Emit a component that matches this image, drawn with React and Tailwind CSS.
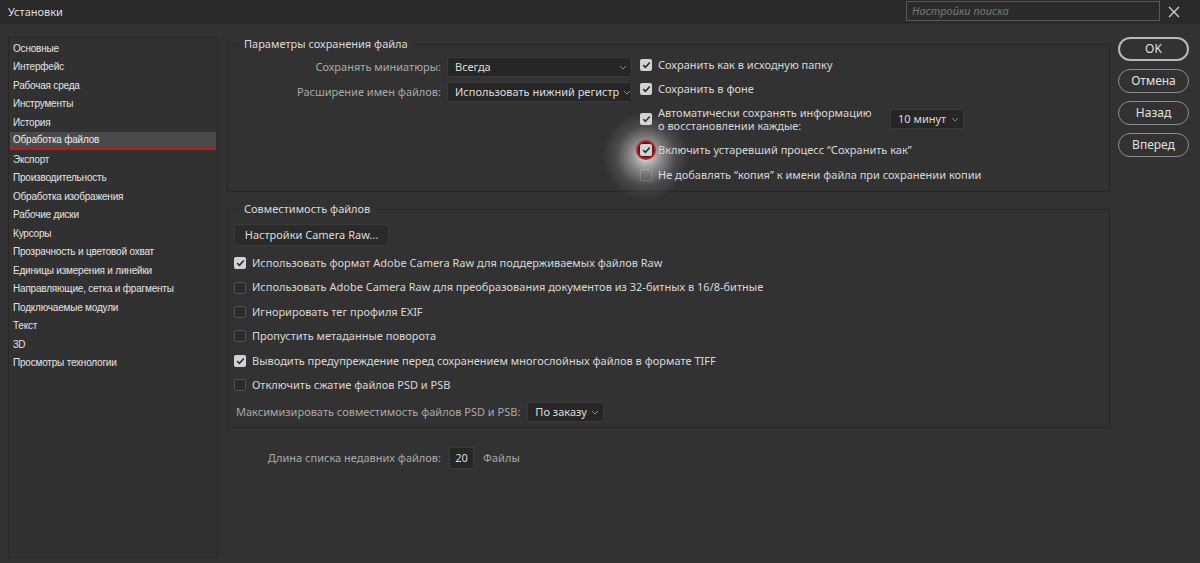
import React from "react";

const font = { fontFamily: '"Noto Sans", "Liberation Sans", sans-serif' };
const sideFont = { fontFamily: '"Liberation Sans", Arial, sans-serif' };

const sideItems = [
  "Основные",
  "Интерфейс",
  "Рабочая среда",
  "Инструменты",
  "История",
  "Обработка файлов",
  "Экспорт",
  "Производительность",
  "Обработка изображения",
  "Рабочие диски",
  "Курсоры",
  "Прозрачность и цветовой охват",
  "Единицы измерения и линейки",
  "Направляющие, сетка и фрагменты",
  "Подключаемые модули",
  "Текст",
  "3D",
  "Просмотры технологии",
];

const Chevron = () => (
  <svg width="8" height="5" viewBox="0 0 8 5" className="shrink-0">
    <polyline points="1,1 4,4 7,1" fill="none" stroke="#8a8a8a" strokeWidth="1" />
  </svg>
);

const Select = ({ value, className }) => (
  <div
    className={`flex items-center justify-between gap-[4px] h-[20px] pl-[7px] pr-[4px] bg-[#262626] border border-[#3a3a3a] rounded-[2px] text-[11px] text-[#dcdcdc] ${className}`}
  >
    <span className="whitespace-nowrap">{value}</span>
    <Chevron />
  </div>
);

const Check = ({ checked }) =>
  checked ? (
    <div className="w-[12px] h-[12px] rounded-[2px] bg-[#d2d2d2] flex items-center justify-center shrink-0">
      <svg width="9" height="8" viewBox="0 0 9 8">
        <polyline points="1.2,4.2 3.4,6.3 7.8,1.5" fill="none" stroke="#2e2e2e" strokeWidth="1.6" />
      </svg>
    </div>
  ) : (
    <div className="w-[12px] h-[12px] rounded-[2px] bg-[#2b2b2b] border border-[#555555] shrink-0" />
  );

const CheckRow = ({ checked, children, className = "" }) => (
  <div className={`flex items-center gap-[6px] text-[11px] text-[#d8d8d8] whitespace-nowrap ${className}`}>
    <Check checked={checked} />
    <span>{children}</span>
  </div>
);

const PillButton = ({ children, strong }) => (
  <div
    className={`w-[71px] h-[24px] rounded-full flex items-center justify-center text-[12px] text-[#e0e0e0] ${
      strong ? "border-2 border-[#b8b8b8]" : "border border-[#8e8e8e]"
    }`}
  >
    {children}
  </div>
);

export default function App() {
  return (
    <div className="w-[1200px] h-[563px] bg-[#323232] flex flex-col overflow-hidden select-none" style={font}>
      {/* Title bar */}
      <div className="h-[24px] bg-[#2a2a2a] flex items-center shrink-0">
        <span className="ml-[8px] text-[11px] text-[#dedede]">Установки</span>
        <div className="ml-auto w-[254px] h-[20px] mb-[2px] border border-[#595959] bg-[#2b2b2b] flex items-center px-[5px]">
          <span className="italic text-[11px] text-[#7a7a7a]">Настройки поиска</span>
        </div>
        <svg width="12" height="12" viewBox="0 0 12 12" className="ml-[8px] mr-[20px]">
          <path d="M1 1 L11 11 M11 1 L1 11" stroke="#d0d0d0" strokeWidth="1.4" />
        </svg>
      </div>

      {/* Body */}
      <div className="flex flex-1 min-h-0">
        {/* Sidebar */}
        <div
          className="ml-[8px] mt-[13px] w-[210px] h-[521px] border border-[#272727] bg-[#313131] p-px shrink-0"
          style={sideFont}
        >
          {sideItems.map((item, i) =>
            i === 5 ? (
              <div
                key={item}
                className="h-[18.5px] flex items-center pl-[3px] bg-[#4a4a4a] border-b-2 border-[#c3161c] text-[10px] text-[#ececec] tracking-[-0.2px]"
              >
                {item}
              </div>
            ) : (
              <div key={item} className="h-[18.5px] flex items-center pl-[3px] text-[10px] text-[#e4e4e4] tracking-[-0.2px]">
                {item}
              </div>
            )
          )}
        </div>

        {/* Main */}
        <div className="ml-[9px] w-[883px] shrink-0 flex flex-col">
          {/* Group 1 */}
          <fieldset className="mt-[11px] h-[157px] border border-[#272727] px-0 pb-0 relative">
            <legend className="ml-[11px] px-[5px] text-[11px] text-[#dadada] leading-[18px]">
              Параметры сохранения файла
            </legend>
            <div className="flex">
              <div className="w-[404px] flex flex-col gap-[5px] pt-[4px]">
                <div className="flex items-center justify-end gap-[6px]">
                  <span className="text-[11px] text-[#a9a9a9]">Сохранять миниатюры:</span>
                  <Select value="Всегда" className="w-[185px]" />
                </div>
                <div className="flex items-center justify-end gap-[6px]">
                  <span className="text-[11px] text-[#a9a9a9]">Расширение имен файлов:</span>
                  <Select value="Использовать нижний регистр" className="w-[185px]" />
                </div>
              </div>
              <div className="ml-[8px] flex flex-col">
                <CheckRow checked className="h-[24px]">Сохранить как в исходную папку</CheckRow>
                <CheckRow checked className="h-[24px]">Сохранить в фоне</CheckRow>
                <div className="h-[36px] flex items-center">
                  <CheckRow checked>
                    <span className="block leading-[13px] w-[226px]">
                      Автоматически сохранять информацию
                      <br />о восстановлении каждые:
                    </span>
                  </CheckRow>
                  <Select value="10 минут" className="ml-[6px] w-[74px]" />
                </div>
                <div className="relative">
                  {/* highlight annotation */}
                  <div className="absolute left-[-44px] top-[-31px] w-[100px] h-[100px] rounded-full pointer-events-none bg-[radial-gradient(circle,rgba(255,255,255,0.85)_0%,rgba(255,255,255,0.45)_20%,rgba(255,255,255,0.12)_42%,rgba(255,255,255,0)_62%)]" />
                  <div className="absolute left-[-4px] top-[3px] w-[20px] h-[20px] rounded-full border-2 border-[#d11a1a] pointer-events-none bg-[#2c2c2c]" />
                  <CheckRow checked className="h-[26px] relative">Включить устаревший процесс “Сохранить как”</CheckRow>
                </div>
                <CheckRow className="h-[24px]">Не добавлять “копия” к имени файла при сохранении копии</CheckRow>
              </div>
            </div>
          </fieldset>

          {/* Group 2 */}
          <fieldset className="mt-[8px] h-[228px] border border-[#272727] px-0 pb-0">
            <legend className="ml-[11px] px-[5px] text-[11px] text-[#dadada] leading-[18px]">
              Совместимость файлов
            </legend>
            <div className="pl-[6px] flex flex-col">
              <div className="mt-[6px] w-[155px] h-[22px] bg-[#2a2a2a] border border-[#3a3a3a] rounded-[2px] flex items-center justify-center text-[11px] text-[#dcdcdc]">
                Настройки Camera Raw...
              </div>
              <div className="mt-[5px] flex flex-col">
                <CheckRow checked className="h-[24.4px]">
                  Использовать формат Adobe Camera Raw для поддерживаемых файлов Raw
                </CheckRow>
                <CheckRow className="h-[24.4px]">
                  Использовать Adobe Camera Raw для преобразования документов из 32-битных в 16/8-битные
                </CheckRow>
                <CheckRow className="h-[24.4px]">Игнорировать тег профиля EXIF</CheckRow>
                <CheckRow className="h-[24.4px]">Пропустить метаданные поворота</CheckRow>
                <CheckRow checked className="h-[24.4px]">
                  Выводить предупреждение перед сохранением многослойных файлов в формате TIFF
                </CheckRow>
                <CheckRow className="h-[24.4px]">Отключить сжатие файлов PSD и PSB</CheckRow>
              </div>
              <div className="mt-[5px] flex items-center gap-[7px] pl-[2px]">
                <span className="text-[11px] text-[#a9a9a9]">Максимизировать совместимость файлов PSD и PSB:</span>
                <Select value="По заказу" className="w-[77px]" />
              </div>
            </div>
          </fieldset>

          {/* Recent files */}
          <div className="mt-[19px] flex items-center">
            <div className="w-[214px] text-right text-[11px] text-[#a9a9a9]">Длина списка недавних файлов:</div>
            <div className="ml-[8px] w-[25px] h-[22px] bg-[#262626] border border-[#3a3a3a] flex items-center justify-center text-[11px] text-[#dcdcdc]">
              20
            </div>
            <span className="ml-[9px] text-[11px] text-[#a9a9a9]">Файлы</span>
          </div>
        </div>

        {/* Buttons */}
        <div className="ml-[8px] mt-[13px] flex flex-col gap-[8px]">
          <PillButton strong>OK</PillButton>
          <PillButton>Отмена</PillButton>
          <PillButton>Назад</PillButton>
          <PillButton>Вперед</PillButton>
        </div>
      </div>
    </div>
  );
}
